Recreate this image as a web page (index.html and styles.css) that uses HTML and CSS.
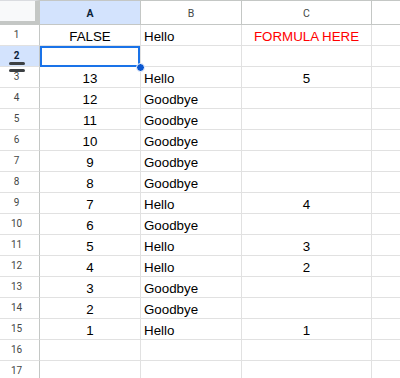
FILE: index.html
```html
<!DOCTYPE html>
<html>
<head>
<meta charset="utf-8">
<link rel="stylesheet" href="styles.css">
</head>
<body>
<div class="sheet">
  <div class="corner"></div>
  <div class="colhdr sel">A</div>
  <div class="colhdr">B</div>
  <div class="colhdr">C</div>
  <div class="colhdr last"></div>

  <div class="rowhdr">1</div><div class="cell c">FALSE</div><div class="cell">Hello</div><div class="cell c red">FORMULA HERE</div><div class="cell last"></div>
  <div class="rowhdr sel"><span>2</span><i class="bar bar1"></i><i class="bar bar2"></i></div><div class="cell active"><i class="selbox"></i><i class="handle"></i></div><div class="cell"></div><div class="cell"></div><div class="cell last"></div>
  <div class="rowhdr">3</div><div class="cell c">13</div><div class="cell">Hello</div><div class="cell c">5</div><div class="cell last"></div>
  <div class="rowhdr">4</div><div class="cell c">12</div><div class="cell">Goodbye</div><div class="cell c"></div><div class="cell last"></div>
  <div class="rowhdr">5</div><div class="cell c">11</div><div class="cell">Goodbye</div><div class="cell c"></div><div class="cell last"></div>
  <div class="rowhdr">6</div><div class="cell c">10</div><div class="cell">Goodbye</div><div class="cell c"></div><div class="cell last"></div>
  <div class="rowhdr">7</div><div class="cell c">9</div><div class="cell">Goodbye</div><div class="cell c"></div><div class="cell last"></div>
  <div class="rowhdr">8</div><div class="cell c">8</div><div class="cell">Goodbye</div><div class="cell c"></div><div class="cell last"></div>
  <div class="rowhdr">9</div><div class="cell c">7</div><div class="cell">Hello</div><div class="cell c">4</div><div class="cell last"></div>
  <div class="rowhdr">10</div><div class="cell c">6</div><div class="cell">Goodbye</div><div class="cell c"></div><div class="cell last"></div>
  <div class="rowhdr">11</div><div class="cell c">5</div><div class="cell">Hello</div><div class="cell c">3</div><div class="cell last"></div>
  <div class="rowhdr">12</div><div class="cell c">4</div><div class="cell">Hello</div><div class="cell c">2</div><div class="cell last"></div>
  <div class="rowhdr">13</div><div class="cell c">3</div><div class="cell">Goodbye</div><div class="cell c"></div><div class="cell last"></div>
  <div class="rowhdr">14</div><div class="cell c">2</div><div class="cell">Goodbye</div><div class="cell c"></div><div class="cell last"></div>
  <div class="rowhdr">15</div><div class="cell c">1</div><div class="cell">Hello</div><div class="cell c">1</div><div class="cell last"></div>
  <div class="rowhdr">16</div><div class="cell c"></div><div class="cell"></div><div class="cell c"></div><div class="cell last"></div>
  <div class="rowhdr">17</div><div class="cell c"></div><div class="cell"></div><div class="cell c"></div><div class="cell last"></div>
</div>
</body>
</html>
```

FILE: styles.css
```css
html, body {
  margin: 0;
  padding: 0;
  background: #ffffff;
  overflow: hidden;
}
body {
  width: 400px;
  height: 378px;
}
.sheet {
  display: grid;
  grid-template-columns: 40px 101px 101px 130px 1fr;
  grid-template-rows: 25px repeat(17, 21px);
  font-family: "Liberation Sans", Arial, sans-serif;
}
.sheet > div {
  box-sizing: border-box;
}
.corner {
  background: #f8f9fa;
  border-top: 1px solid #dadce0;
  border-right: 5px solid #c4c7c5;
  border-bottom: 4px solid #c4c7c5;
}
.colhdr {
  border-top: 1px solid #c4c7c5;
  border-right: 1px solid #c4c7c5;
  border-bottom: 1px solid #c4c7c5;
  background: #ffffff;
  color: #444746;
  font-family: Roboto, "Liberation Sans", sans-serif;
  font-size: 10.5px;
  text-align: center;
  line-height: 24px;
  padding-top: 1px;
}
.colhdr.sel {
  background: #d3e3fd;
  color: #0b1f3a;
  font-weight: 700;
}
.colhdr.last {
  border-right: none;
}
.rowhdr {
  position: relative;
  border-right: 1px solid #c4c7c5;
  border-bottom: 1px solid #e1e1e1;
  color: #444746;
  font-family: Roboto, "Liberation Sans", sans-serif;
  font-size: 10px;
  line-height: 20px;
  text-align: center;
  padding-right: 6px;
}
.rowhdr.sel {
  background: #d3e3fd;
  color: #0b1f3a;
  font-weight: 700;
  z-index: 2;
}
.bar {
  position: absolute;
  left: 9px;
  width: 16px;
  height: 3px;
  border-radius: 1.5px;
  background: #3c4043;
}
.bar1 { top: 16px; }
.bar2 { top: 23px; height: 2.5px; }
.cell {
  border-right: 1px solid #e1e1e1;
  border-bottom: 1px solid #e1e1e1;
  font-size: 13.33px;
  color: #000000;
  line-height: 23px;
  padding: 0 3px;
  white-space: nowrap;
  overflow: visible;
}
.cell.c {
  text-align: center;
}
.cell.red {
  color: #ff0000;
}
.cell.last {
  border-right: none;
}
.cell.active {
  position: relative;
  z-index: 3;
}
.selbox {
  position: absolute;
  left: 0;
  top: 0;
  width: 100px;
  height: 21px;
  box-sizing: border-box;
  border: 2px solid #1a73e8;
}
.handle {
  position: absolute;
  left: 96px;
  top: 17px;
  width: 7px;
  height: 7px;
  border-radius: 50%;
  background: #0b57d0;
  border: 1px solid #ffffff;
}
```
